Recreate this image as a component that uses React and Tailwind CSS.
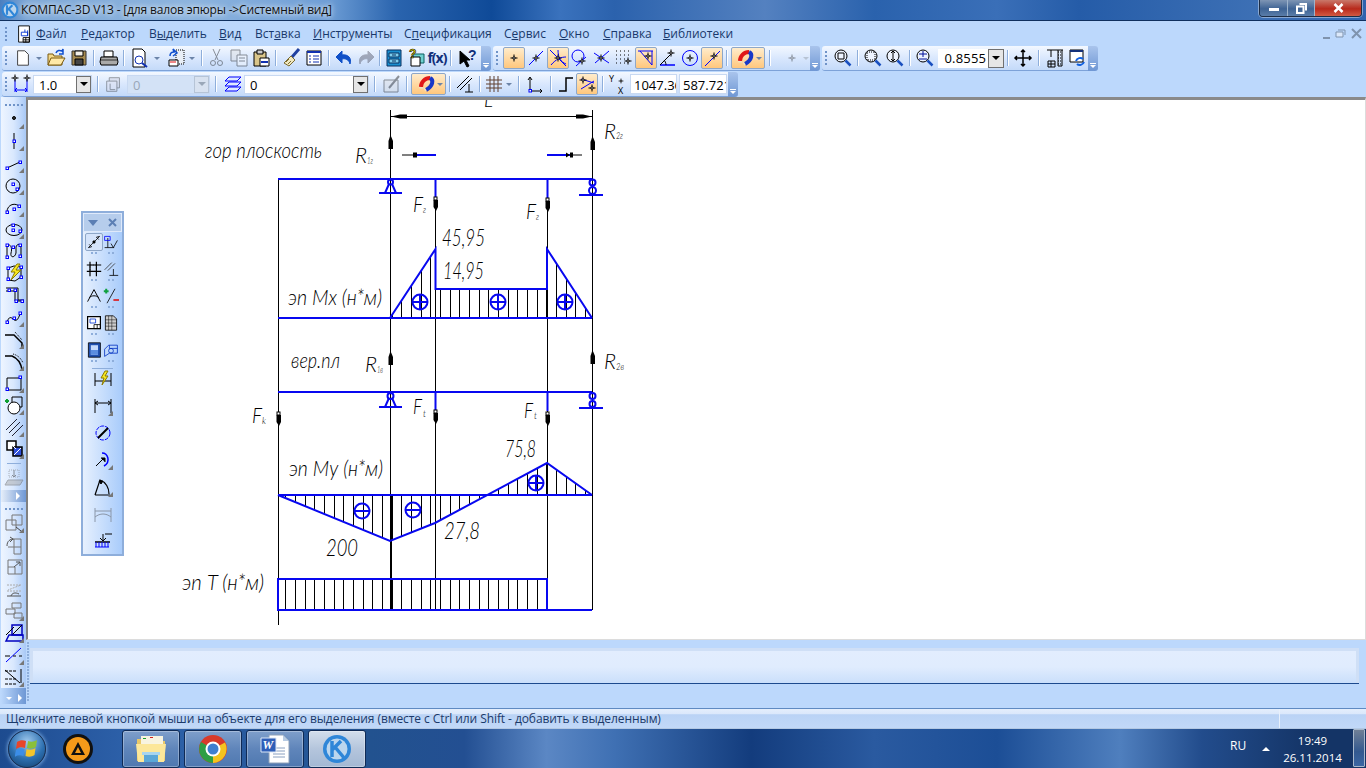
import React from "react";

const BL = "#0808f0";
const H = ({ x, y }) => <rect x={x} y={y} width="2.5" height="2.5" fill="#fff" stroke="#00f" strokeWidth="1" />;
const Cn = () => <path d="M20 20h-5l5-5z" fill="#777" stroke="none" />;
const Ic = ({ s = 20, v = 20, dim, children }) => (
  <svg width={s} height={s} viewBox={`0 0 ${v} ${v}`} fill="none" stroke="#000" strokeWidth="1" className={dim ? "opacity-40" : ""}>{children}</svg>
);
const Cross = ({ x, y }) => <g stroke="#000"><path d={`M${x - 3.5} ${y}h7M${x} ${y - 3.5}v7`} /><circle cx={x} cy={y} r="1.2" fill="#fff" /></g>;
const Mag = ({ s = 22 }) => (
  <svg width={s} height={s} viewBox="0 0 22 22" fill="none">
    <path d="M6 14C6 9 10 5 15 5" stroke="#e01818" strokeWidth="4" />
    <path d="M15 5C19 7 18 13 11 17" stroke="#1838c8" strokeWidth="4" />
    <path d="M4 14.500l4 .5M9 15l2 3" stroke="#f0e0c0" strokeWidth="1.500" />
  </svg>
);
const Drop = ({ dim }) => <span className={`w-0 h-0 border-x-[3px] border-x-transparent border-t-[3px] ${dim ? "border-t-[#b8c4d4]" : "border-t-[#6c84a8]"}`} />;
const Sep = ({ m = "mx-[6px]" }) => <span className={`w-px h-[16px] bg-[#8eaedb] border-r border-white box-content ${m}`} />;
const Dots = ({ v }) => <span className={`flex ${v ? "flex-col" : ""} gap-[2px] w-[2px] mx-[3px]`}>{[0, 1, 2, 3].map(i => <i key={i} className="block w-[2px] h-[2px] bg-[#6f93c8]" />)}</span>;
const Chev = () => (
  <span className="w-[10px] h-full flex flex-col items-center justify-end pb-[3px] gap-[1px] bg-[linear-gradient(180deg,#a9c4ec,#6f97d4)] rounded-r-[3px] shrink-0">
    <i className="block w-[6px] h-px bg-white" />
    <i className="w-0 h-0 border-x-[3px] border-x-transparent border-t-[3px] border-t-white" />
  </span>
);
const Group = ({ w, children }) => (
  <div className={`h-[25px] flex items-stretch shrink-0 ${w}`}>
    <div className="flex-1 min-w-0 flex items-center rounded-l-[3px] border-b border-[#7da2d8] bg-[linear-gradient(180deg,#f3f8ff,#d7e6fd_55%,#c4daf9)]">{children}</div>
    <Chev />
  </div>
);
const T = ({ w = "w-[22px]", on, children }) => (
  <span className={`${w} h-[22px] shrink-0 flex items-center justify-center rounded-[2px] ${on ? "border border-[#8ea7c8] bg-[linear-gradient(180deg,#ffeccb,#ffc77d)]" : ""}`}>{children}</span>
);
const Combo = ({ w, tw = "", val, dim }) => (
  <span className={`${w} h-[19px] flex shrink-0 border border-[#c8d9f2] ${dim ? "bg-[#d3e2f6]" : "bg-white"}`}>
    <span className={`flex-1 pl-[5px] text-[13px] leading-[18px] ${dim ? "text-[#9aa7b8]" : "text-black"} ${tw}`}>{val}</span>
    <span className={`w-[15px] flex items-center justify-center border ${dim ? "border-[#b6c4d6] bg-[#d8e2f0]" : "border-[#707070] bg-[#e6e6e6]"}`}>
      <i className={`w-0 h-0 border-x-[4px] border-x-transparent border-t-[4px] ${dim ? "border-t-[#9aa7b8]" : "border-t-black"}`} />
    </span>
  </span>
);

const Zoom = ({ children }) => (
  <Ic>
    <circle cx="8" cy="8" r="6" stroke="#000" fill="#eef4ff" />
    {children}
    <path d="M12.5 12.5l5 5" stroke="#1a50c0" strokeWidth="2.5" />
  </Ic>
);

const wMap = { "36px": "w-[45px]", "81px": "w-[68px]", "149px": "w-[70px]", "219px": "w-[36px]", "255px": "w-[58px]", "313px": "w-[91px]", "404px": "w-[100px]", "504px": "w-[55px]", "559px": "w-[44px]", "603px": "w-[60px]", "663px": "w-[80px]" };
const MenuItem = ({ l, children }) => <span className={`${wMap[l]} shrink-0`}>{children}</span>;
const Menu = () => (
  <div className="h-[25px] flex items-center shrink-0 text-[12px] text-[#19386b]">
    <span className="ml-[2px]"><Dots v /></span>
    <span className="w-[25px] ml-[1px] flex justify-center">
      <Ic s={18}>
        <path d="M4 1h12v18H4z" fill="#fff" />
        <path d="M7 8h7v4H7z" stroke="#0030d0" /><path d="M11 5v3M14 6v6" stroke="#0030d0" />
        <path d="M9 14h7v5H9zM9 16.500h7M12 14v5" />
      </Ic>
    </span>
    {[["36px", "Ф", "айл"], ["81px", "Р", "едактор"], ["149px", "В", "ыделить", 1], ["219px", "В", "ид"], ["255px", "Вст", "авка", 2], ["313px", "И", "нструменты"], ["404px", "Сп", "ецификация", 3], ["504px", "С", "ервис", 4], ["559px", "О", "кно"], ["603px", "С", "правка"], ["663px", "Б", "иблиотеки"]].map(([l, a, b, k]) => {
      let inner;
      if (k === 1) inner = <>В<u>ы</u>делить</>;
      else if (k === 2) inner = <>Вст<u>а</u>вка</>;
      else if (k === 3) inner = <>С<u>п</u>ецификация</>;
      else if (k === 4) inner = <>С<u>е</u>рвис</>;
      else inner = <><u>{a}</u>{b}</>;
      return <MenuItem key={l} l={l}>{inner}</MenuItem>;
    })}
    <span className="ml-auto mr-[4px] flex items-center gap-[5px] text-[#8ca3c4]">
      <i className="block w-[7px] h-[2px] mt-[8px] bg-[#7f93ad]" />
      <Ic s={11} v={11}><path d="M1 4h7v5H1z" stroke="#7f93ad" fill="#dbe8fa" /><path d="M3 2h7v5" stroke="#7f93ad" /></Ic>
      <Ic s={11} v={11}><path d="M1 1l9 9M10 1l-9 9" stroke="#7f93ad" strokeWidth="2" /></Ic>
    </span>
  </div>
);

const Row1 = () => (
  <div className="h-[26px] flex items-start pl-[2px] shrink-0">
    <Group w="w-[489px]">
      <Dots v />
      <span className="w-[2px]" />
      <T><Ic s={18}><path d="M4 2h8l4 4v12H4z" fill="#fff" stroke="#333" /></Ic></T>
      <span className="w-[13px] flex justify-center"><Drop /></span>
      <T w="w-[23px]"><Ic><path d="M2 6h5l1 2h8v9H2z" fill="#f4d98a" stroke="#7a5a10" /><path d="M5 10h14l-4 7H2z" fill="#ffe9a8" stroke="#7a5a10" /><path d="M10 5c1-3 4-3 6-2l1-2v5h-4" stroke="#1050d0" strokeWidth="1.5" /></Ic></T>
      <T><Ic><path d="M3 3h14v14H3z" fill="#a58a50" stroke="#333" /><path d="M6 3h8v5H6z" fill="#f3f0e8" /><path d="M6 11h8v6H6z" fill="#444" /></Ic></T>
      <Sep m="mx-[3px]" />
      <T><Ic><path d="M5 3h9v6H5z" fill="#fff" /><path d="M2 9h16l1 5-1 3H2l-1-3z" fill="#aaa" /><path d="M2 12h16" stroke="#333" /></Ic></T>
      <Sep m="mx-[3px]" />
      <span className="w-[2px]" />
      <T><Ic><path d="M3 1h9l3 3v15H3z" fill="#fff" /><circle cx="9" cy="12" r="4" stroke="#1030b0" /><path d="M12 15l5 4" stroke="#1030b0" strokeWidth="2" /></Ic></T>
      <span className="w-[13px] flex justify-center"><Drop /></span>
      <span className="w-[3px]" />
      <T><Ic><path d="M10 2h8v14h-8z" fill="#e8eef6" strokeDasharray="1 1" /><path d="M3 12h9v6H3z" fill="#fff" /><path d="M4 14h6" stroke="#e01010" /><path d="M4 8c0-3 2-4 4-4l-1-3 4 4-4 3" stroke="#1050d0" strokeWidth="1.5" /></Ic></T>
      <span className="w-[12px] flex justify-center"><Drop /></span>
      <Sep m="mx-[4px]" />
      <T w="w-[20px]"><Ic dim><path d="M6 1l5 11M13 1L8 12" /><circle cx="6" cy="15" r="2.500" /><circle cx="13" cy="15" r="2.500" /></Ic></T>
      <T w="w-[23px]"><Ic dim><path d="M2 2h9v11H2z" fill="#ddd" /><path d="M8 7h10v11H8z" fill="#fff" /><path d="M10 10h6M10 13h6" /></Ic></T>
      <T><Ic><path d="M3 4h12v14H3z" fill="#d9c58a" /><path d="M6 2h6v4H6z" fill="#ccc" /><path d="M9 10h9v8H9z" fill="#fff" /><path d="M10 14h7" stroke="#1030b0" strokeWidth="2" /></Ic></T>
      <Sep m="ml-[3px] mr-[4px]" />
      <T><Ic><path d="M17 1l-7 8" stroke="#2040a0" strokeWidth="3" /><path d="M9 8l4 4-6 6-5-3z" fill="#f0e8c0" stroke="#7a6a30" /><path d="M4 14l3-3M6 16l3-3" stroke="#7a6a30" /></Ic></T>
      <T><Ic><path d="M3 3h14v14H3z" fill="#fff" stroke="#000" /><path d="M3 4h14" stroke="#1030b0" strokeWidth="2" /><path d="M5 8h2M9 8h6M5 11h2M9 11h6M5 14h2M9 14h6" stroke="#1030b0" /></Ic></T>
      <Sep m="mx-[3px]" />
      <T><Ic><path d="M16 16c2-6-2-10-8-9V3L2 9l6 6v-4c4-1 7 1 8 5z" fill="#1050c8" stroke="#1050c8" /></Ic></T>
      <T><Ic dim><path d="M4 16c-2-6 2-10 8-9V3l6 6-6 6v-4c-4-1-7 1-8 5z" fill="#445" stroke="#445" /></Ic></T>
      <Sep m="mx-[2px]" />
      <T><Ic><path d="M3 2h14v16H3z" fill="#1a8fd0" stroke="#0a3060" /><path d="M5 5h10v4H5zM5 11h10v4H5z" fill="#7fd0f0" stroke="#0a3060" /><path d="M8 7h4M8 13h4" stroke="#0a3060" /></Ic></T>
      <T><Ic><path d="M7 6h11v9H7z" fill="#6fd0d0" stroke="#0a6060" /><path d="M5 9h9v9H5z" fill="#fff" /><text x="3" y="10" fontSize="12" fontWeight="700" fill="#f0e000" stroke="#000" strokeWidth=".6" fontFamily="Liberation Sans">?</text></Ic></T>
      <span className="w-[24px] text-center text-[14px] leading-none font-bold text-[#12307a] tracking-[-1px]">f(x)</span>
      <Sep m="mx-[3px]" />
      <T w="w-[26px]"><Ic><path d="M2 3l10 9H8l3 6-2 1-3-6-4 3z" fill="#000" /><text x="10" y="12" fontSize="14" fontWeight="700" fill="#12307a" stroke="none" fontFamily="Liberation Sans">?</text></Ic></T>
    </Group>
    <span className="w-[2px]" />
    <Group w="w-[327px]">
      <Dots v />
      <span className="w-[2px]" />
      <T on><Ic><Cross x={10} y={10} /></Ic></T>
      <T><Ic><path d="M3 17L17 3" stroke="#00f" /><Cross x={10} y={10} /></Ic></T>
      <T on><Ic><path d="M2 2l16 16M3 17c5-6 10-8 15-8M10 2c0 8 3 12 8 14" stroke="#00f" /><Cross x={10} y={10} /></Ic></T>
      <T><Ic><circle cx="8" cy="8" r="6" stroke="#00f" /><path d="M6 18l10-9" stroke="#00f" /><Cross x={12} y={13} /></Ic></T>
      <T><Ic><path d="M2 5l15 10M3 15L17 3" stroke="#00f" /><Cross x={9} y={10} /></Ic></T>
      <T><Ic><path d="M2 3h1m3 0h1m3 0h1m3 0h1M2 7h1m3 0h1m3 0h1m3 0h1M2 11h1m3 0h1m3 0h1M2 15h1m3 0h1m3 0h1" strokeWidth="1" /><Cross x={14} y={13} /></Ic></T>
      <T on><Ic><path d="M2 3h15v0M4 3l12 14V3" stroke="#00f" /><Cross x={12} y={8} /></Ic></T>
      <T><Ic><path d="M2 17h15" stroke="#00f" strokeWidth="1.500" /><path d="M2 17L13 6M8 17c0-2-1-4-2-5" stroke="#000" /><Cross x={13} y={5} /></Ic></T>
      <T><Ic><circle cx="10" cy="10" r="7.500" stroke="#00f" /><Cross x={10} y={10} /></Ic></T>
      <T on><Ic><path d="M3 18L18 3" stroke="#00f" /><Cross x={12} y={8} /></Ic></T>
      <Sep m="mx-[3px]" />
      <T on w="w-[34px]"><Mag /><Drop /></T>
      <Sep m="mx-[4px]" />
      <span className="w-[6px]" />
      <T><Ic dim><Cross x={10} y={10} /></Ic></T>
      <Drop dim />
    </Group>
    <span className="w-[2px]" />
    <Group w="w-[276px]">
      <Dots v />
      <span className="w-[3px]" />
      <T><Zoom><path d="M5 5h6v6H5z" /></Zoom></T>
      <Sep m="mx-[3px]" />
      <T><Zoom><path d="M4 4h8v8H4z" strokeDasharray="1 1" /></Zoom></T>
      <T><Zoom><path d="M8 3v10M6 5l2-2 2 2M6 11l2 2 2-2" /></Zoom></T>
      <Sep m="mx-[3px]" />
      <T><Zoom><path d="M4 6h8M8 3v6M4 11h8" stroke="#00109a" /></Zoom></T>
      <span className="w-[3px]" />
      <span className="h-[19px] w-[66px] flex bg-white shrink-0">
        <span className="flex-1 pl-[6px] text-[13px] leading-[19px] text-black tracking-[0.2px]">0.8555</span>
        <span className="w-[16px] flex items-center justify-center border border-[#707070] bg-[#e6e6e6]"><i className="w-0 h-0 border-x-[4px] border-x-transparent border-t-[4px] border-t-black" /></span>
      </span>
      <Sep m="mx-[3px]" />
      <T><Ic><path d="M10 2v16M2 10h16M8 4l2-2 2 2M8 16l2 2 2-2M4 8l-2 2 2 2M16 8l2 2-2 2" strokeWidth="1.500" /></Ic></T>
      <Sep m="mx-[4px]" />
      <T><Ic><path d="M2 2h16M13 2v16h4V2" /><path d="M13 4h4M13 7h4M13 10h4M13 13h4M13 16h4" strokeDasharray="1 1" /><path d="M3 13h7v6H3zM3 16h7M6 13v6M6 2v7" /></Ic></T>
      <T><Ic><path d="M3 2h13v12H3z" fill="#fff" /><path d="M3 3h13" stroke="#12307a" strokeWidth="2" /><path d="M9 13c1-3 5-4 7-2M17 14c-1 3-5 4-7 2" stroke="#1060e0" strokeWidth="2" /></Ic></T>
    </Group>
  </div>
);

const Row2 = () => (
  <div className="h-[25px] flex items-start pl-[2px] shrink-0">
    <Group w="w-[736px]">
      <Dots v />
      <T><Ic><path d="M4 6v12M16 6v12M4 16h12M6 14l-2 2 2 2M14 14l2 2-2 2" stroke="#00f" /><Cross x={4} y={4} /><Cross x={16} y={4} /></Ic></T>
      <span className="w-px" />
      <Combo w="w-[59px]" val="1.0" />
      <Sep m="mx-[5px]" />
      <T w="w-[19px]"><Ic s={17} dim><path d="M5 2h12v12H5z" fill="#ccd" /><path d="M2 6h12v12H2z" fill="#dde" /><path d="M6 9v7M6 16h6" /></Ic></T>
      <span className="w-[4px]" />
      <Combo w="w-[83px]" val="0" dim />
      <Sep m="mx-[5px]" />
      <T><Ic><path d="M6 3h12l-4 4H2zM6 8h12l-4 4H2zM6 13h12l-4 4H2z" stroke="#00f" fill="#dfeaff" /></Ic></T>
      <Combo w="w-[125px]" val="0" />
      <Sep m="mx-[5px]" />
      <T><Ic dim><path d="M2 6h14v12H2z" fill="#ddd" /><path d="M17 2L7 14" strokeWidth="2" /></Ic></T>
      <Sep m="mx-[3px]" />
      <T on w="w-[35px]"><Mag /><Drop /></T>
      <Sep m="mx-[3px]" />
      <T><Ic><path d="M2 14L14 2M5 16L17 4" /><path d="M10 18h8M14 10v8" /></Ic></T>
      <Sep m="mx-[3px]" />
      <T w="w-[20px]"><Ic><path d="M2 6h16M2 10h16M2 14h16M6 2v16M10 2v16M14 2v16" stroke="#604030" /></Ic></T>
      <span className="w-[10px] flex justify-center"><Drop /></span>
      <Sep m="mx-[4px]" />
      <T><Ic><path d="M5 4v13h12M15 15l2 2-2 2M3 6l2-3 2 3" stroke="#000" /><rect x="4" y="15.500" width="2.500" height="2.500" stroke="#00f" fill="#fff" /></Ic></T>
      <Sep m="mx-[4px]" />
      <T w="w-[20px]"><Ic><path d="M3 17h7V4h7" strokeWidth="1.500" /></Ic></T>
      <T on><Ic><path d="M4 5l13 4M4 15l13-8" stroke="#00f" /><Cross x={6} y={6} /><Cross x={15} y={14} /></Ic></T>
      <Sep m="mx-[4px]" />
      <span className="w-[22px] relative h-[22px] text-[9px] text-black leading-none shrink-0">
        <span className="absolute left-[1px] top-[1px]">Y</span><span className="absolute left-[10px] top-[13px]">X</span>
        <svg className="absolute left-[6px] top-[1px]" width="14" height="14" viewBox="0 0 20 20" fill="none"><Cross x={10} y={10} /></svg>
      </span>
      <span className="w-[47px] h-[20px] bg-white overflow-hidden pl-[3px] text-[13px] leading-[20px] text-black shrink-0 whitespace-nowrap border border-[#c8d9f2]">1047.36</span>
      <span className="w-[2px]" />
      <span className="w-[48px] h-[20px] bg-white overflow-hidden pl-[3px] text-[13px] leading-[20px] text-black shrink-0 whitespace-nowrap border border-[#c8d9f2]">587.721</span>
    </Group>
  </div>
);

const LeftItem = ({ children, dim }) => <div className={`h-[22px] flex items-center pl-[3px] ${dim ? "opacity-50" : ""}`}>{children}</div>;
const FiveDots = () => <span className="flex gap-[2px]">{[0, 1, 2, 3, 4].map(i => <i key={i} className="block w-[2px] h-[2px] bg-[#6f93c8]" />)}</span>;
const LeftStrip = () => (
  <div className="w-[26px] shrink-0 flex flex-col bg-[#bcd8fc]">
    <div className="w-[25px] ml-px bg-[linear-gradient(90deg,#eef5ff,#d9e8fe_50%,#a9c9f6)]">
      <div className="h-[11px] flex items-end justify-center pb-[2px]"><FiveDots /></div>
      <LeftItem><Ic><circle cx="10" cy="9" r="1.500" fill="#333" /><Cn /></Ic></LeftItem>
      <LeftItem><Ic><path d="M10 2v16" /><H x={9} y={9} /><Cn /></Ic></LeftItem>
      <LeftItem><Ic><path d="M3 15L16 9" /><H x={2} y={14} /><H x={15} y={8} /><Cn /></Ic></LeftItem>
      <LeftItem><Ic><circle cx="9" cy="11" r="7" /><H x={8} y={8} /><H x={12} y={13} /><Cn /></Ic></LeftItem>
      <LeftItem><Ic><path d="M3 15c0-8 9-10 13-5" /><H x={2} y={14} /><H x={9} y={11} /><H x={14} y={8} /><Cn /></Ic></LeftItem>
      <LeftItem><Ic><ellipse cx="10" cy="11" rx="8" ry="5.500" /><H x={8} y={5} /><H x={8} y={10} /><H x={15} y={11} /><Cn /></Ic></LeftItem>
      <LeftItem><Ic><path d="M3 16V6c2-5 6 0 4 6-1 5 4 5 5 0V6c1-4 5-3 5 1v7" /><H x={2} y={3} /><H x={2} y={15} /><H x={8} y={5} /><H x={15} y={3} /><H x={15} y={14} /></Ic></LeftItem>
      <LeftItem><Ic><path d="M4 17V5l6-2 7 1v10l-6 4z" /><H x={3} y={4} /><H x={3} y={15} /><H x={16} y={3} /><H x={16} y={13} /><path d="M13 1L7 9h4l-4 8 10-10h-5l4-6z" fill="#f8e820" stroke="#8a7a00" /></Ic></LeftItem>
      <LeftItem><Ic><path d="M2 3h12v12h6M2 6h9v10h8" /><H x={4} y={4} /><H x={10} y={4} /><H x={11} y={15} /><H x={17} y={15} /></Ic></LeftItem>
      <LeftItem><Ic><path d="M3 16c1-5 3-7 6-4s5 1 7-5" /><H x={2} y={14} /><H x={9} y={10} /><H x={15} y={5} /><Cn /></Ic></LeftItem>
      <LeftItem><Ic><path d="M1 6h9l8 8v6" strokeWidth="1.500" /><path d="M11 3l7 8" strokeDasharray="1 1" /><Cn /></Ic></LeftItem>
      <LeftItem><Ic><path d="M1 5h7c5 2 9 7 10 14" strokeWidth="1.500" /><path d="M9 3c4 1 8 4 10 9" strokeDasharray="1 1" /><Cn /></Ic></LeftItem>
      <LeftItem><Ic><path d="M3 5h14v12H3z" /><H x={2} y={15} /><H x={15} y={3} /><Cn /></Ic></LeftItem>
      <LeftItem><Ic><path d="M8 2h10v10H8z" /><circle cx="10" cy="13" r="6" fill="#fff" /><path d="M3 4v4M1 6h4" stroke="#10a030" strokeWidth="2" /><Cn /></Ic></LeftItem>
      <LeftItem><Ic><path d="M2 13L13 2M5 16L16 5M8 19L19 8" stroke="#223" /><Cn /></Ic></LeftItem>
      <LeftItem><Ic><path d="M3 2h9v9H3z" fill="#fff" strokeWidth="1.500" /><path d="M9 8h9v9H9z" fill="#3050d8" strokeWidth="1.500" /><path d="M10 16l7-7M12 10l-4-4" stroke="#fff" /><Cn /></Ic></LeftItem>
      <div className="h-[6px] flex items-center justify-center"><i className="block w-[14px] h-px bg-[#8eaedb]" /></div>
      <LeftItem dim><Ic><path d="M5 3h10v7H5z" stroke="#777" strokeDasharray="1 1" /><path d="M10 3v7M8 8l2 2 2-2" stroke="#333" /><path d="M4 13h15l-3 5H1z" fill="#aaa" stroke="#666" /></Ic></LeftItem>
      <div className="h-[12px] mt-[2px] flex items-center justify-end pr-[6px] bg-[linear-gradient(90deg,#e6eef9,#6e97d4)]"><i className="w-0 h-0 border-y-[4px] border-y-transparent border-l-[4px] border-l-white" /></div>
      <div className="h-[10px] flex items-end justify-center pb-[2px]"><FiveDots /></div>
      <LeftItem><Ic><g stroke="#777"><path d="M8 2h10v10H8zM2 7h10v10H2z" /></g><path d="M12 14l5 4" stroke="#444" /><Cn /></Ic></LeftItem>
      <LeftItem><Ic><g stroke="#777"><path d="M10 4h7v15h-7zM4 12h13" /></g><path d="M3 11c0-5 3-7 7-7M6 2l3 2-3 3" stroke="#555" /></Ic></LeftItem>
      <LeftItem><Ic><g stroke="#777"><path d="M4 3h14v14H4zM4 10h7v7" /></g><path d="M10 10l6-5M12 5h4v4" stroke="#555" /></Ic></LeftItem>
      <LeftItem><Ic><path d="M3 6h14L4 11M3 12h14" stroke="#aaa" strokeDasharray="2 1" /><path d="M3 17h14M7 17c1-3 4-4 8-2" stroke="#555" /></Ic></LeftItem>
      <LeftItem><Ic><g stroke="#777"><path d="M8 2h9v5H8zM2 8h9v5H2zM10 12h8v5h-8z" /></g><Cn /></Ic></LeftItem>
      <LeftItem><Ic><path d="M8 2h10v10H8z" stroke="#0000c0" strokeWidth="1.500" /><path d="M8 12L18 2" /><path d="M2 18l3-6h14v6z" stroke="#0000c0" strokeWidth="1.500" /><path d="M2 12l8-8" /><Cn /></Ic></LeftItem>
      <LeftItem><Ic><path d="M2 17L17 3" stroke="#00f" /><path d="M1 11h5M9 11h3M15 11h3" /><Cn /></Ic></LeftItem>
      <LeftItem><Ic><path d="M1 4h12M1 12h12" strokeDasharray="3 1" /><path d="M17 2v14M1 3l15 13" /><path d="M1 17h12" strokeDasharray="3 1" /><Cn /></Ic></LeftItem>
      <div className="h-[16px] flex items-end pb-[2px] justify-center gap-[6px] bg-[linear-gradient(90deg,#bcd8fc,#6e97d4)]">
        <i className="w-0 h-0 border-x-[3px] border-x-transparent border-t-[3px] border-t-white mb-[2px]" />
        <i className="w-0 h-0 border-y-[4px] border-y-transparent border-l-[4px] border-l-white" />
      </div>
    </div>
  </div>
);

const PanelCell = ({ children, on }) => (
  <div className="w-[17px] h-[27px] flex flex-col items-center relative">
    <span className={`w-[18px] h-[18px] flex items-center justify-center shrink-0 ${on ? "border border-[#8ea7c8] rounded-[2px] bg-[#d5e4fb]" : ""}`}>{children}</span>
    <span className="flex gap-[2px] mt-[1px]"><i className="block w-[2px] h-[2px] bg-[#8eaedb]" /><i className="block w-[2px] h-[2px] bg-[#8eaedb]" /></span>
  </div>
);
const Pair = ({ a, b, on }) => <div className="flex justify-center w-full"><PanelCell on={on}>{a}</PanelCell><PanelCell>{b}</PanelCell></div>;
const S16 = ({ children }) => <Ic s={16}>{children}</Ic>;
const Floating = () => (
  <div className="absolute left-[53px] top-[111px] w-[43px] h-[345px] border-2 border-[#8eaedb] bg-[linear-gradient(90deg,#e6f0fe,#a9ccfb)] flex flex-col">
    <div className="h-[19px] shrink-0 bg-[#b6cdec] flex items-center justify-between px-[4px] border border-[#dfeafb]">
      <i className="w-0 h-0 border-x-[5px] border-x-transparent border-t-[6px] border-t-[#5c7fb4]" />
      <svg width="9" height="9" viewBox="0 0 9 9"><path d="M1 1l7 7M8 1L1 8" stroke="#5c7fb4" strokeWidth="2" /></svg>
    </div>
    <div className="pt-[1px] flex flex-col">
      <Pair on a={<S16><path d="M3 17L17 3M3 17l4-1-3-3M17 3l-4 1 3 3" /><circle cx="10" cy="10" r="1.500" fill="#000" /></S16>} b={<S16><path d="M2 17h12M6 17V5" /><path d="M2 3h7v5H2z" stroke="#00f" /><path d="M10 12l3 5 5-9" /></S16>} />
      <Pair a={<S16><path d="M1 5h18M1 13h18M5 1v18M13 1v18" strokeWidth="1.500" /><path d="M5 5h8v8H5z" strokeDasharray="1 1" /></S16>} b={<S16><path d="M2 11L11 2M6 12L15 3" stroke="#333" /><path d="M8 18h11M13 10v8" /></S16>} />
      <Pair a={<S16><path d="M10 2L2 17M10 2l8 15M4 12c3-3 9-3 12 0" strokeWidth="1.200" /></S16>} b={<S16><path d="M15 1L5 19" /><path d="M1 4h6M4 1v6" stroke="#10a040" strokeWidth="2.500" /><path d="M13 15h7" stroke="#e01010" strokeWidth="2" /></S16>} />
      <Pair a={<S16><path d="M2 2h16v15H2z" strokeWidth="1.500" fill="#fff" /><path d="M5 5h7v5H5z" stroke="#0030d0" /><path d="M10 12h8v5h-8zM14 12v5" /></S16>} b={<S16><path d="M3 1h10l4 4v14H3z" fill="#ccc" /><path d="M3 6h14M3 10h14M3 14h14M7 1v18M11 1v18" strokeWidth=".6" /></S16>} />
      <Pair a={<S16><path d="M3 1h15v18H3z" fill="#2050b0" /><path d="M6 4h9v12H6z" fill="#c6dafc" stroke="none" /><path d="M6 10h9v6H6z" fill="#5b8de0" stroke="none" /></S16>} b={<S16><path d="M2 9l5-5h11v10H8l-6 4z" stroke="#0030c0" /><circle cx="10" cy="11" r="3" stroke="#0030c0" /><path d="M8 4v4h10" stroke="#0030c0" /></S16>} />
      <div className="h-[5px] flex items-start justify-center"><i className="block w-[21px] h-px bg-[#8eaedb]" /></div>
      <div className="flex flex-col items-center -mt-[6px]">
        {[
          <><path d="M2 4v13M18 4v13M2 12h16" /><path d="M12 2L8 9h3l-2 7 6-9h-3l3-5z" fill="#f8e820" stroke="#8a7a00" /></>,
          <><path d="M2 3v14M18 3v14M2 7h16M5 5L2 7l3 2M15 5l3 2-3 2" /><Cn /></>,
          <><circle cx="10" cy="10" r="7" stroke="#00f" strokeDasharray="4 1" /><path d="M5 15L15 5" strokeWidth="2" /></>,
          <><path d="M9 3c6 0 9 9 2 13" stroke="#00f" strokeWidth="1.500" /><path d="M3 16l8-8" /><path d="M8 8h4v4" fill="#000" /><Cn /></>,
          <><path d="M2 18h15M2 18L7 3c6 2 9 8 9 14" strokeWidth="1.200" /><path d="M6 4l4 0-2 3z" fill="#000" /><Cn /></>,
          <g stroke="#8a96a8"><path d="M2 4v14M18 4v14M2 7h16" /><path d="M2 13c5-4 11-4 16 0" /></g>,
          <><path d="M12 3h7M10 3v7M7 7l3 3 3-3" /><path d="M2 11h15" strokeWidth="1.500" /><path d="M3 11v5M6 11v5M9 11v5M12 11v5M15 11v5" stroke="#00f" /><path d="M2 16h14" stroke="#00f" /></>,
        ].map((c, i) => <div key={i} className="h-[27px] flex items-start pt-[2px] justify-center"><Ic s={20}>{c}</Ic></div>)}
      </div>
    </div>
  </div>
);

const LB = ({ d, w = 2 }) => <path d={d} stroke={BL} strokeWidth={w} fill="none" />;
const UpA = ({ x, y }) => <path d={`M${x} ${y}l2.500 6v8h-4.500v-8z`} fill="#000" />;
const DnA = ({ x, y }) => <g><rect x={x - 1.500} y={y} width="3" height="3" fill="#fff" stroke="#000" /><path d={`M${x - 2} ${y + 3}h4.500v7l-2 4-2.500-4z`} fill="#000" /></g>;
const Ci = ({ x, y, minus }) => (
  <g stroke={BL} strokeWidth="2" fill="none"><circle cx={x} cy={y} r="7.500" /><path d={`M${x - 7.500} ${y}h15`} />{minus ? null : <path d={`M${x} ${y - 7.500}v15`} />}</g>
);
const G = ({ x, y, w, s = 22, children }) => (
  <text x={x} y={y} textLength={w} lengthAdjust="spacingAndGlyphs" fontSize={s} fontStyle="italic" fontWeight="300" fontFamily="Lato, Open Sans, sans-serif" fill="#000">{children}</text>
);
const gridX = Array.from({ length: 33 }, (_, i) => 285.3 + i * 9.67);
const hatch = (y1f, y2f) => gridX.map(x => ({ x, a: y1f(x), b: y2f(x) }));
const interp = (pts, x) => {
  for (let i = 0; i < pts.length - 1; i++) {
    const [x1, y1] = pts[i], [x2, y2] = pts[i + 1];
    if (x >= x1 && x <= x2) return y1 + (y2 - y1) * (x - x1) / (x2 - x1);
  }
  return null;
};
const mx = [[390, 318], [435, 249], [435.01, 289], [547, 289], [547.01, 249], [592, 318]];
const my = [[278, 495], [390, 541], [435, 523], [488, 495], [547, 463], [592, 495]];

const Drawing = () => (
  <svg width="1338" height="540" viewBox="28 100 1338 540" className="block">
    <g stroke="#000" strokeWidth="1" shapeRendering="crispEdges">
      <path d="M390.500 110V610M592.500 110V610M435.500 180V610M547.500 180V610M278.500 180V625M390 116.500H592" />
      <path d="M390 610.500H592" />
      {hatch(x => interp(mx, x), () => 318).filter(h => h.a !== null).map(h => <path key={h.x} d={`M${Math.round(h.x) + .5} ${h.a}V318`} />)}
      {hatch(() => 495, x => interp(my, x)).filter(h => h.b !== null).map(h => <path key={h.x} d={`M${Math.round(h.x) + .5} ${h.b}V495`} />)}
      {gridX.filter(x => x < 547).map(x => <path key={x} d={`M${Math.round(x) + .5} 579V610`} />)}
      <path d="M391.500 495V610" />
    </g>
    <path d="M391 116.500L400 114.500H407V118.500H400zM592 116.500L583 114.500H576V118.500H583z" fill="#000" />
    <text x="484" y="107" fontSize="19" fontStyle="italic" fontWeight="300" fontFamily="Lato, sans-serif" fill="#000">L</text>
    <UpA x={390.500} y={135} /><UpA x={592.500} y={136} /><UpA x={390.500} y={351} /><UpA x={592.500} y={350} />
    <path d="M402 155h14" stroke="#000" /><path d="M413 152.500h4v5h-4z" fill="#000" /><LB d="M417 155H436" />
    <LB d="M547 155H570" /><path d="M570 155h12" stroke="#000" /><path d="M566 152.500l4 2.500-4 2.500zM570 152.500h3v5h-3z" fill="#000" />

    <LB d="M278 179H592M435.500 179V198M547.500 179V198" />
    <LB d="M379 193H402M579 195H603" />
    <g stroke={BL} strokeWidth="2" fill="none">
      <circle cx="390.500" cy="182" r="2.500" /><path d="M389 184l-4 9M392 184l4 9" />
      <circle cx="592.500" cy="182.500" r="3" /><circle cx="592.500" cy="190.500" r="3.500" />
    </g>
    <DnA x={435.500} y={197} /><DnA x={547.500} y={198} />

    <path d="M278 318H592" stroke={BL} strokeWidth="2" />
    <path d="M390 318L435.500 249V289H547V249L592 318" stroke={BL} strokeWidth="2" fill="none" />
    <Ci x={420} y={302} /><Ci x={498} y={302} /><Ci x={565} y={302} />

    <LB d="M278 392H592M435.500 392V411M547.500 392V411M379 407H402M579 408H603" />
    <g stroke={BL} strokeWidth="2" fill="none">
      <circle cx="390.500" cy="396" r="3" /><path d="M389 398l-4 9M392 398l4 9" />
      <circle cx="592.500" cy="396" r="3" /><circle cx="592.500" cy="404" r="3" />
    </g>
    <DnA x={278.500} y={412} /><DnA x={435.500} y={410} /><DnA x={547.500} y={412} />

    <path d="M278 495H592" stroke={BL} strokeWidth="2" />
    <path d="M278 495L390 541L435 523L547 463L592 495" stroke={BL} strokeWidth="2" fill="none" />
    <Ci x={362} y={511} minus /><Ci x={413} y={510} minus /><Ci x={536} y={483} />

    <path d="M278 579H547V610H278Z M547 610H592" stroke={BL} strokeWidth="2" fill="none" />

    <G x={205} y={158} w={117}>гор плоскость</G>
    <G x={355} y={163} w={12}>R</G><G x={367} y={164} w={6} s={9}>1г</G>
    <G x={604} y={139} w={12}>R</G><G x={616} y={139} w={7} s={9}>2г</G>
    <G x={413} y={212} w={10}>F</G><G x={423} y={213} w={3} s={9}>г</G>
    <G x={526} y={219} w={10}>F</G><G x={536} y={220} w={3} s={9}>г</G>
    <G x={442} y={246} w={43} s={23}>45,95</G>
    <G x={443} y={279} w={41} s={23}>14,95</G>
    <G x={288} y={305} w={94}>эп Mx (н*м)</G>
    <G x={291} y={368} w={49}>вер.пл</G>
    <G x={365} y={372} w={12}>R</G><G x={377} y={373} w={6} s={9}>1в</G>
    <G x={604} y={369} w={12}>R</G><G x={616} y={370} w={8} s={9}>2в</G>
    <G x={252} y={423} w={10}>F</G><G x={262} y={424} w={4} s={9}>k</G>
    <G x={413} y={414} w={9}>F</G><G x={423} y={417} w={3} s={9}>t</G>
    <G x={524} y={418} w={9}>F</G><G x={534} y={419} w={3} s={9}>t</G>
    <G x={505} y={457} w={31} s={23}>75,8</G>
    <G x={289} y={476} w={94}>эп Mу (н*м)</G>
    <G x={326} y={556} w={32} s={23}>200</G>
    <G x={444} y={539} w={36} s={23}>27,8</G>
    <G x={182} y={590} w={82}>эп T (н*м)</G>
  </svg>
);

const TaskBtn = ({ on, children }) => (
  <span className={`w-[58px] h-[38px] mt-[1px] shrink-0 flex items-center justify-center rounded-[3px] border border-[#0f2a55] shadow-[inset_0_0_0_1px_rgba(255,255,255,.3)] ${on ? "bg-[linear-gradient(180deg,#d3deec,#b4c5dc_50%,#a3b8d3)]" : "bg-[linear-gradient(180deg,#7f9fcb,#5f85ba_50%,#4f78b0)]"}`}>{children}</span>
);
const KLogo = ({ s }) => (
  <svg width={s} height={s} viewBox="0 0 30 30" fill="none">
    <circle cx="15" cy="15" r="14" fill="#2f86d8" />
    <circle cx="15" cy="15" r="10.500" fill="#bcd6ee" />
    <path d="M10 7v16M10 16L19 7M13 13l10 12" stroke="#2f86d8" strokeWidth="3.500" />
  </svg>
);

const Taskbar = () => (
  <div className="h-[40px] shrink-0 relative flex items-center text-white border-t border-[#b3c8e3] bg-[linear-gradient(90deg,#1d4b8f_0,#2e62ab_10%,#22528f_27%,#234f92_34%,#5b87c4_40%,#3f70b3_45%,#133c7d_55%,#2a5aa0_64%,#1c4e96_73%,#4f7fbe_82%,#224c8c_88%,#143466_96%)]">
    <span className="w-[122px] shrink-0 flex items-center">
      <span className="ml-[8px] w-[38px] h-[38px] rounded-full border border-[#1b2f4f] shadow-[0_0_4px_#9fd0ff] bg-[radial-gradient(circle_at_50%_30%,#9fc9ee,#2c6fb0_55%,#123d6a)] flex items-center justify-center">
        <svg width="24" height="22" viewBox="0 0 24 22">
          <path d="M2 4c3-2 6-2 9-1l-1 7c-3-1-6-1-9 1z" fill="#e8452a" />
          <path d="M13 3c3 1 6 1 9-1l-1 7c-3 2-6 2-9 1z" fill="#8ac03a" />
          <path d="M1 12c3-2 6-2 8.500-1l-1 7c-3-1-6-1-9 1z" fill="#3c8ee8" />
          <path d="M11.500 11c3 1 6 1 9-1l-1 7c-3 2-6 2-9 1z" fill="#f5c52a" />
        </svg>
      </span>
      <span className="ml-[17px] w-[30px] h-[30px] rounded-full bg-[#111] flex items-center justify-center">
        <svg width="24" height="24" viewBox="0 0 24 24"><circle cx="12" cy="12" r="12" fill="#f59a1a" /><path d="M12 5l7 13H5zM12 10l-3 6h6z" fill="#111" fillRule="evenodd" /></svg>
      </span>
    </span>
    <span className="flex gap-[4px]">
      <TaskBtn>
        <svg width="32" height="30" viewBox="0 0 32 30">
          <path d="M2 5h10l2 2h16v20H2z" fill="#e8c86a" /><path d="M6 2h22v8H6z" fill="#f8f4e0" /><path d="M1 10h30l-2 18H3z" fill="#fce79a" />
          <path d="M9 20h14v8H9z" fill="#5aa7d8" /><path d="M7 18h18v3H7z" fill="#a7d5ef" />
          <path d="M8 4h3v1H8z" fill="#20a030" /><path d="M15 3h3v1h-3z" fill="#d02020" />
        </svg>
      </TaskBtn>
      <TaskBtn>
        <svg width="30" height="30" viewBox="0 0 30 30">
          <circle cx="15" cy="15" r="14" fill="#d83a2a" />
          <path d="M15 15L27 8.500A14 14 0 0 1 15 29z" fill="#f4c41f" />
          <path d="M15 15L15 29A14 14 0 0 1 3 8z" fill="#2e9e44" />
          <circle cx="15" cy="15" r="7.500" fill="#fff" /><circle cx="15" cy="15" r="5.500" fill="#3f7fd0" />
        </svg>
      </TaskBtn>
      <TaskBtn>
        <svg width="32" height="32" viewBox="0 0 32 32">
          <path d="M10 2h14l6 6v22H10z" fill="#fff" stroke="#8ea0b8" /><path d="M24 2l6 6h-6z" fill="#b8cce4" />
          <path d="M14 15h12M14 18h12M14 21h12M14 24h12" stroke="#8aa0c0" />
          <path d="M2 5h15v14H2z" fill="#2f5fb8" stroke="#dbe6f6" />
          <text x="3.500" y="16" fontSize="12" fontWeight="700" fontStyle="italic" fontFamily="Liberation Serif" fill="#fff">W</text>
        </svg>
      </TaskBtn>
      <TaskBtn on><KLogo s={30} /></TaskBtn>
    </span>
    <span className="absolute left-[1230px] top-[9px] text-[12px] leading-[16px] font-['Open_Sans','Liberation_Sans',sans-serif]">RU</span>
    <i className="absolute left-[1262px] top-[18px] w-0 h-0 border-x-[4px] border-x-transparent border-b-[4px] border-b-white" />
    <span className="absolute left-[1283px] w-[59px] top-[3px] text-center text-[11.500px] leading-[17px] font-['Open_Sans','Liberation_Sans',sans-serif]">19:49<br />26.11.2014</span>
    <span className="absolute right-[1px] top-0 w-[12px] h-[38px] border border-[#a9b9cc] rounded-[1px] bg-[linear-gradient(180deg,#6f7f96,#33598f_60%,#3a66a3)]" />
  </div>
);

export default function App() {
  return (
    <div className="w-[1366px] h-[768px] overflow-hidden flex flex-col bg-[#bcd8fc] font-['Open_Sans','Noto_Sans',sans-serif]">
      <div className="h-[21px] shrink-0 relative flex items-center border-b border-[#10305e] bg-[linear-gradient(90deg,#4a7fc0_0,#7fa9d8_2%,#8db4de_14%,#6e9ed6_24%,#2a64ae_29%,#0f4a98_36%,#3a72bd_41%,#2b62ad_45%,#5481c0_56%,#2a62ad_64%,#3a6fb8_73%,#255ca8_79%,#3d70b5_92%,#2f62ae_100%)]">
        <span className="ml-[1px] w-[18px] flex"><KLogo s={18} /></span>
        <span className="ml-[2px] text-[12px] leading-none text-[#111] tracking-[-0.16px] whitespace-nowrap [text-shadow:0_0_5px_rgba(255,255,255,.9),0_0_8px_rgba(255,255,255,.6)]">КОМПАС-3D V13 - [для валов эпюры -&gt;Системный вид]</span>
        <span className="absolute right-[4px] top-0 flex h-[17px] border border-t-0 border-[#1d2d45] rounded-b-[4px] overflow-hidden shadow-[0_0_0_1px_rgba(255,255,255,.4)]">
          <span className="w-[28px] flex items-center justify-center bg-[linear-gradient(180deg,#7e95b4,#3e6394_55%,#5a7da9)] border-r border-[#9db3cc]"><i className="block w-[10px] h-[3px] mt-[3px] bg-white" /></span>
          <span className="w-[27px] flex items-center justify-center bg-[linear-gradient(180deg,#7e95b4,#3e6394_55%,#5a7da9)] border-r border-[#9db3cc]">
            <svg width="11" height="11" viewBox="0 0 11 11" fill="none"><path d="M3.500 1h6.500v6.500M1 3.500h6.500V10H1z" stroke="#fff" strokeWidth="2" /></svg>
          </span>
          <span className="w-[46px] flex items-center justify-center bg-[linear-gradient(180deg,#c9786a,#b8291b_55%,#d25a43)]">
            <svg width="11" height="10" viewBox="0 0 11 10"><path d="M1.500 1l8 8M9.500 1l-8 8" stroke="#fff" strokeWidth="2.500" /></svg>
          </span>
        </span>
      </div>
      <Menu />
      <Row1 />
      <Row2 />
      <div className="flex-1 min-h-0 flex">
        <LeftStrip />
        <div className="flex-1 min-w-0 flex flex-col">
          <div className="h-[543px] shrink-0 relative border-t-[3px] border-l-2 border-t-[#8a8a8a] border-l-[#808080] border-b border-b-[#dcdcdc] border-r border-r-[#dcdcdc] bg-white overflow-hidden">
            <Drawing />
            <Floating />
          </div>
          <div className="flex-1 flex pt-[8px] pr-[7px] relative">
            <span className="absolute left-[1px] top-[2px] w-[2px] h-[60px] bg-[repeating-linear-gradient(180deg,#8eaedb_0,#8eaedb_2px,transparent_2px,transparent_3px)]" />
            <div className="ml-[4px] flex-1 h-[35px] border-[3px] border-b-0 border-[#cfdff6] border-b-transparent shadow-[0_1px_0_#1c4a8e] bg-[linear-gradient(180deg,#e2edfe,#e0ecfe_50%,#cadffb)]" />
          </div>
        </div>
      </div>
      <div className="h-[20px] shrink-0 flex border-t border-[#5f8ac2] bg-[linear-gradient(180deg,#e4eefc,#dbe8fb_25%,#bad3f5_30%,#c1d8f8)] text-[#1b3a6a] text-[12px] leading-[19px]">
        <span className="w-[1280px] pl-[6px] border-r border-[#e8f0fb] whitespace-nowrap tracking-[-0.08px]">Щелкните левой кнопкой мыши на объекте для его выделения (вместе с Ctrl или Shift - добавить к выделенным)</span>
      </div>
      <Taskbar />
    </div>
  );
}
